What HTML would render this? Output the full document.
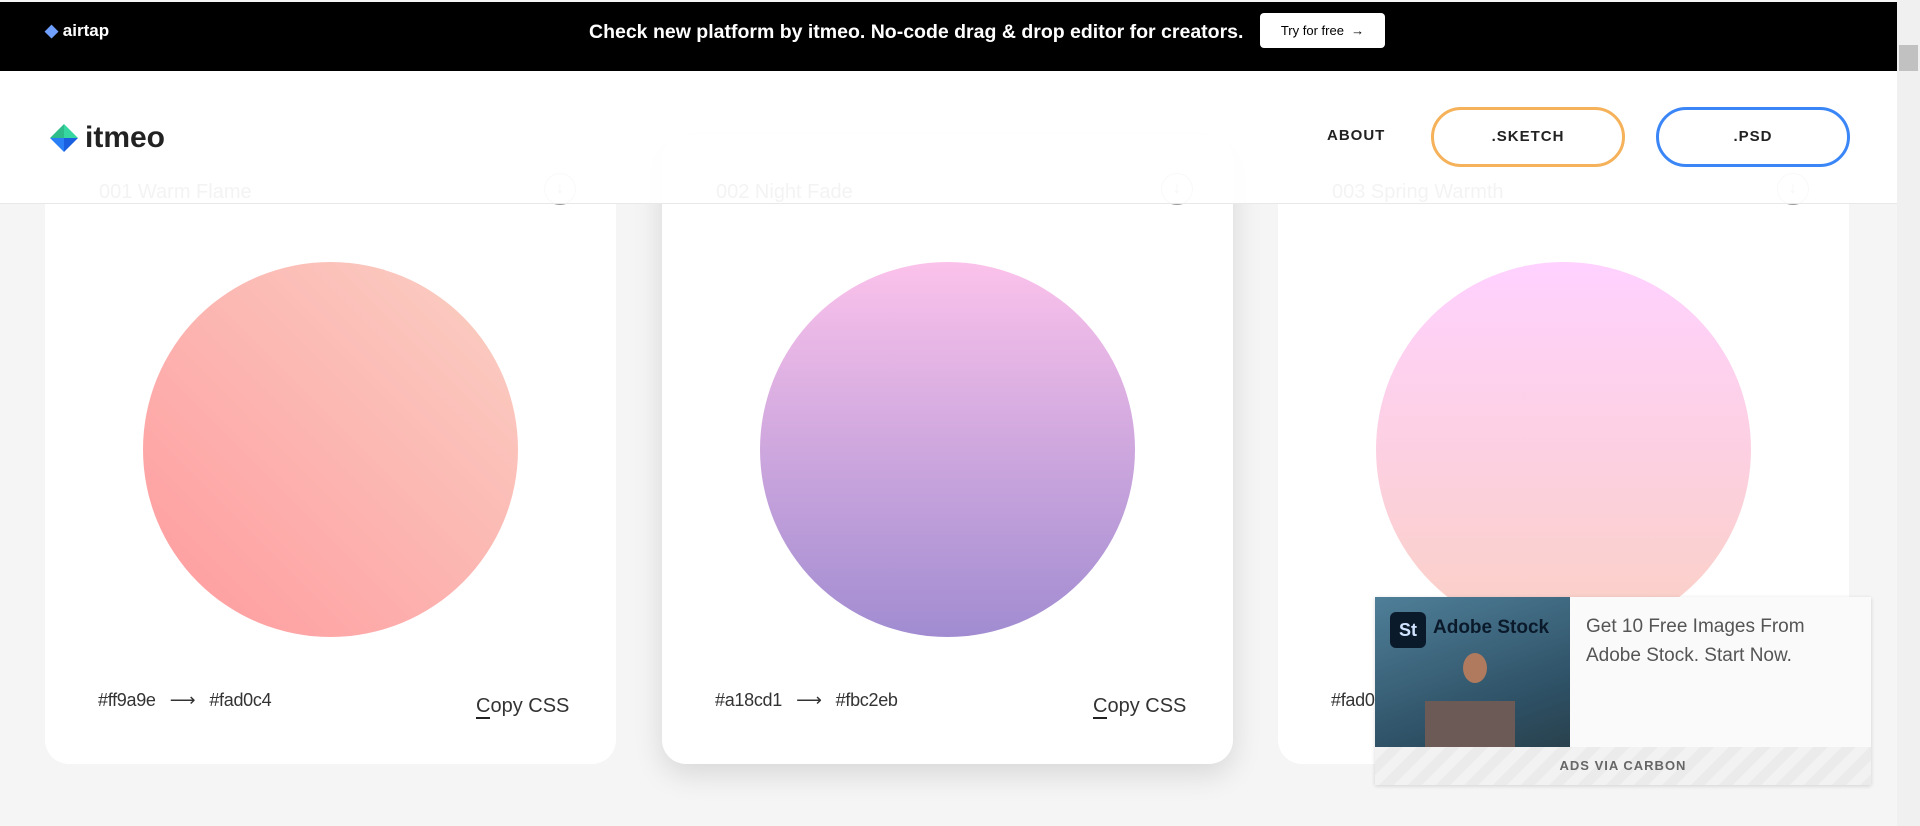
<!DOCTYPE html>
<html><head><meta charset="utf-8"><style>
*{box-sizing:border-box;margin:0;padding:0}
body{width:1920px;height:826px;overflow:hidden;background:#f5f5f5;font-family:"Liberation Sans",sans-serif;position:relative}
.top{position:absolute;left:0;top:2px;width:1897px;height:69px;background:#000;color:#fff}
.top .brand{position:absolute;left:45px;top:19px;font-weight:bold;font-size:17px}
.top .msg{position:absolute;left:589px;top:19px;font-weight:bold;font-size:19.5px}
.top .btn{position:absolute;left:1260px;top:11px;width:125px;height:35px;background:#fff;color:#000;border-radius:4px;font-size:13px;line-height:35px;text-align:center}
.card{position:absolute;top:135px;width:571px;height:629px;background:#fff;border-radius:24px}
.card.hov{box-shadow:0 10px 30px rgba(0,0,0,.12)}
.card .t{position:absolute;left:54px;top:46px;font-size:20px;color:#333}
.card .dl{position:absolute;right:40px;top:38px;width:32px;height:32px;border:1.5px solid #999;border-radius:50%;text-align:center;line-height:29px;color:#666;font-size:16px}
.card .c{position:absolute;left:98px;top:127px;width:375px;height:375px;border-radius:50%}
.card .hex{position:absolute;left:53px;top:555px;font-size:18px;color:#333;letter-spacing:-0.3px}
.card .cp{position:absolute;left:431px;top:560px;font-size:20px;color:#333}
.card .cp u{text-decoration:none;border-bottom:2px solid #222}
.hdr{position:absolute;left:0;top:71px;width:1897px;height:133px;background:rgba(255,255,255,.94);border-bottom:1px solid #e8e8e8}
.logo{position:absolute;left:49px;top:50px;font-weight:bold;font-size:30px;color:#222;display:flex;align-items:center;gap:6px}
.about{position:absolute;left:1327px;top:56px;font-weight:bold;font-size:15px;letter-spacing:1px;color:#222}
.pill{position:absolute;top:36px;width:194px;height:60px;border-radius:30px;border:3px solid;font-weight:bold;font-size:15px;letter-spacing:1px;text-align:center;line-height:54px;color:#222}
.ad{position:absolute;left:1375px;top:597px;width:496px;height:188px;background:#fafafa;box-shadow:0 1px 4px rgba(0,0,0,.15)}
.ad .img{position:absolute;left:0;top:0;width:195px;height:150px;background:linear-gradient(160deg,#4f7f99,#2e5166 70%,#29414d)}
.ad .txt{position:absolute;left:211px;top:15px;font-size:19px;line-height:29px;color:#555}
.ad .ft{position:absolute;left:0;top:150px;width:496px;height:38px;background:repeating-linear-gradient(135deg,#f2f2f2 0 10px,#ebebeb 10px 20px);text-align:center;line-height:38px;font-size:13px;font-weight:bold;letter-spacing:1px;color:#666}
.sb{position:absolute;right:0;top:0;width:23px;height:826px;background:#f0f0f0}
</style></head><body>
<div class="card" style="left:45px"><div class="t">001 Warm Flame</div><div class="dl">↓</div><div class="c" style="background:linear-gradient(45deg,#ff9a9e,#fad0c4)"></div><div class="hex">#ff9a9e &nbsp;&nbsp;⟶&nbsp;&nbsp; #fad0c4</div><div class="cp"><u>C</u>opy CSS</div></div>
<div class="card hov" style="left:662px"><div class="t">002 Night Fade</div><div class="dl">↓</div><div class="c" style="background:linear-gradient(to top,#a18cd1,#fbc2eb)"></div><div class="hex">#a18cd1 &nbsp;&nbsp;⟶&nbsp;&nbsp; #fbc2eb</div><div class="cp"><u>C</u>opy CSS</div></div>
<div class="card" style="left:1278px"><div class="t">003 Spring Warmth</div><div class="dl">↓</div><div class="c" style="background:linear-gradient(to top,#fad0c4,#ffd1ff)"></div><div class="hex">#fad0c4 &nbsp;&nbsp;⟶&nbsp;&nbsp; #ffd1ff</div><div class="cp"><u>C</u>opy CSS</div></div>
<div class="hdr">
 <div class="logo"><svg width="30" height="30" viewBox="0 0 30 30"><path d="M15 1 L29 15 L15 15 Z" fill="#36d7a0"/><path d="M1 15 L15 1 L15 15 Z" fill="#2ebd8a"/><path d="M1 15 L15 15 L15 29 Z" fill="#2b7ff6"/><path d="M15 15 L29 15 L15 29 Z" fill="#1a5fe0"/></svg>itmeo</div>
 <div class="about">ABOUT</div>
 <div class="pill" style="left:1431px;border-color:#f5b25a">.SKETCH</div>
 <div class="pill" style="left:1656px;border-color:#3b86f7">.PSD</div>
</div>
<div class="top"><div class="brand"><span style="color:#6fa0ff">◆</span> airtap</div><div class="msg">Check new platform by itmeo. No-code drag &amp; drop editor for creators.</div><div class="btn">Try for free &nbsp;→</div></div>
<div class="ad"><div class="img"><div style="position:absolute;left:15px;top:15px;width:36px;height:36px;background:#0b1a2b;border-radius:6px;color:#cfe3ff;font-weight:bold;font-size:18px;line-height:36px;text-align:center">St</div><div style="position:absolute;left:58px;top:20px;font-weight:bold;font-size:19px;color:#0b1a2b">Adobe Stock</div><div style="position:absolute;left:50px;top:104px;width:90px;height:46px;background:#6b5a55"></div><div style="position:absolute;left:88px;top:56px;width:24px;height:30px;background:#b07a5e;border-radius:50%"></div></div><div class="txt">Get 10 Free Images From<br>Adobe Stock. Start Now.</div><div class="ft">ADS VIA CARBON</div></div>
<div class="sb"><div style="position:absolute;left:2px;top:45px;width:19px;height:26px;background:#c1c1c1"></div></div>
</body></html>
